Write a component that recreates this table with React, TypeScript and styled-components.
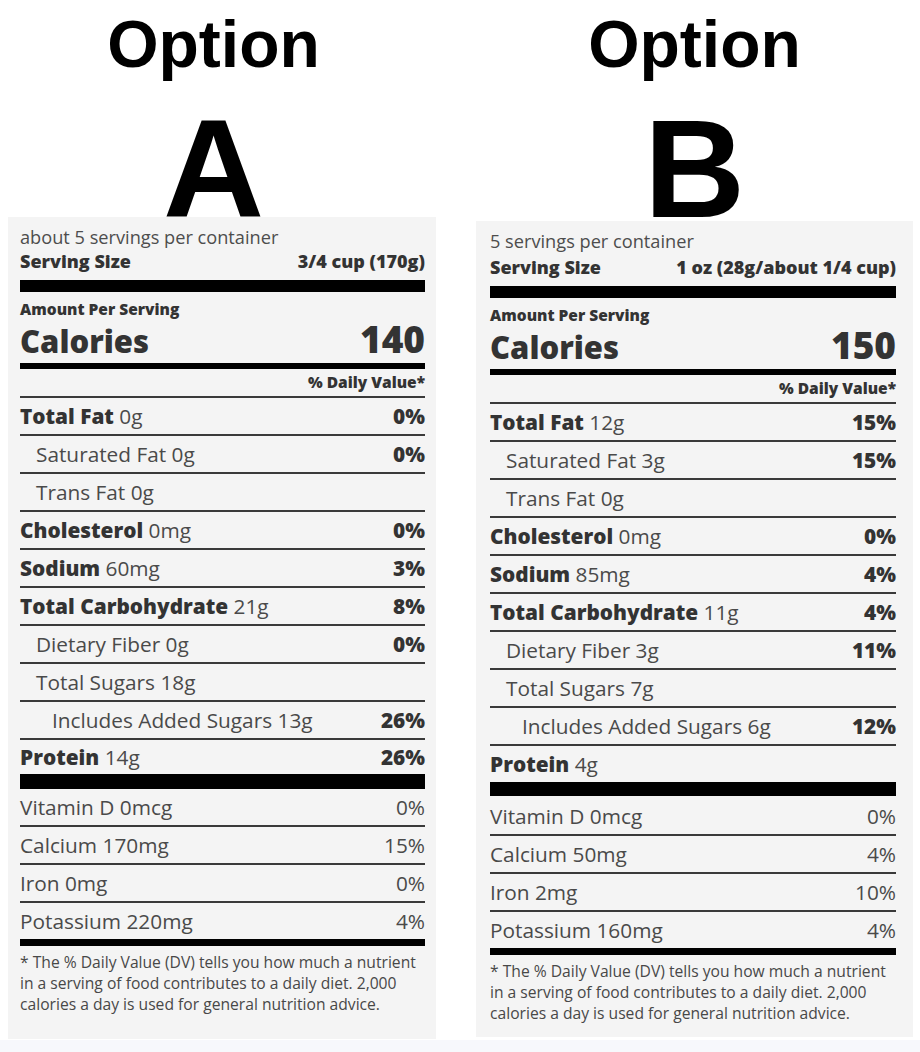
import React from 'react';
import styled, { createGlobalStyle } from 'styled-components';

const GlobalStyle = createGlobalStyle`
  html, body {
    margin: 0;
    padding: 0;
    background: #ffffff;
  }
  * {
    box-sizing: border-box;
  }
`;

interface Nutrient {
  name: string;
  amount: string;
  dv?: string;
  bold?: boolean;
  indent?: number;
}

interface Spacing {
  shift: number;
  letterH: number;
  padLeft: number;
  padRight: number;
  ssGap: number;
  proteinH: number;
  barH: number;
  vitGap: number;
  bottom: number;
}

interface LabelData {
  letter: string;
  servings: string;
  size: string;
  calories: string;
  nutrients: Nutrient[];
  protein: { amount: string; dv?: string };
  vitamins: [string, string][];
  spacing: Spacing;
}

const labels: LabelData[] = [
  {
    letter: 'A',
    servings: 'about 5 servings per container',
    size: '3/4 cup (170g)',
    calories: '140',
    nutrients: [
      { name: 'Total Fat', amount: '0g', dv: '0%', bold: true },
      { name: 'Saturated Fat', amount: '0g', dv: '0%', indent: 1 },
      { name: 'Trans Fat', amount: '0g', indent: 1 },
      { name: 'Cholesterol', amount: '0mg', dv: '0%', bold: true },
      { name: 'Sodium', amount: '60mg', dv: '3%', bold: true },
      { name: 'Total Carbohydrate', amount: '21g', dv: '8%', bold: true },
      { name: 'Dietary Fiber', amount: '0g', dv: '0%', indent: 1 },
      { name: 'Total Sugars', amount: '18g', indent: 1 },
      { name: 'Includes Added Sugars', amount: '13g', dv: '26%', indent: 2 },
    ],
    protein: { amount: '14g', dv: '26%' },
    vitamins: [
      ['Vitamin D 0mcg', '0%'],
      ['Calcium 170mg', '15%'],
      ['Iron 0mg', '0%'],
      ['Potassium 220mg', '4%'],
    ],
    spacing: { shift: 17, letterH: 129, padLeft: 12, padRight: 11, ssGap: 0, proteinH: 34, barH: 15, vitGap: 0, bottom: 24 },
  },
  {
    letter: 'B',
    servings: '5 servings per container',
    size: '1 oz (28g/about 1/4 cup)',
    calories: '150',
    nutrients: [
      { name: 'Total Fat', amount: '12g', dv: '15%', bold: true },
      { name: 'Saturated Fat', amount: '3g', dv: '15%', indent: 1 },
      { name: 'Trans Fat', amount: '0g', indent: 1 },
      { name: 'Cholesterol', amount: '0mg', dv: '0%', bold: true },
      { name: 'Sodium', amount: '85mg', dv: '4%', bold: true },
      { name: 'Total Carbohydrate', amount: '11g', dv: '4%', bold: true },
      { name: 'Dietary Fiber', amount: '3g', dv: '11%', indent: 1 },
      { name: 'Total Sugars', amount: '7g', indent: 1 },
      { name: 'Includes Added Sugars', amount: '6g', dv: '12%', indent: 2 },
    ],
    protein: { amount: '4g' },
    vitamins: [
      ['Vitamin D 0mcg', '0%'],
      ['Calcium 50mg', '4%'],
      ['Iron 2mg', '10%'],
      ['Potassium 160mg', '4%'],
    ],
    spacing: { shift: 0, letterH: 133, padLeft: 14, padRight: 17, ssGap: 2, proteinH: 36, barH: 14, vitGap: 2, bottom: 13 },
  },
];

const NutritionLabel: React.FC<{ data: LabelData }> = ({ data }) => {
  const s = data.spacing;
  return (
    <Column>
      <Heading $shift={s.shift}>
        <OptionWord>Option</OptionWord>
        <Letter $h={s.letterH}>{data.letter}</Letter>
      </Heading>
      <Panel $left={s.padLeft} $right={s.padRight} $bottom={s.bottom}>
        <Servings>{data.servings}</Servings>
        <SizeRow $gap={s.ssGap}>
          <span>Serving Size</span>
          <span>{data.size}</span>
        </SizeRow>
        <Bar $h={12} />
        <AmountLine>Amount Per Serving</AmountLine>
        <CaloriesRow>
          <CaloriesWord>Calories</CaloriesWord>
          <CaloriesValue>{data.calories}</CaloriesValue>
        </CaloriesRow>
        <Bar $h={6} />
        <DailyValue>% Daily Value*</DailyValue>
        {data.nutrients.map((n) => (
          <Row key={n.name} $indent={n.indent || 0}>
            <span>
              {n.bold ? <b>{n.name}</b> : n.name} {n.amount}
            </span>
            {n.dv && <b>{n.dv}</b>}
          </Row>
        ))}
        <Row $indent={0} $h={s.proteinH} $plain>
          <span>
            <b>Protein</b> {data.protein.amount}
          </span>
          {data.protein.dv && <b>{data.protein.dv}</b>}
        </Row>
        <Bar $h={s.barH} $after={s.vitGap} />
        {data.vitamins.map(([label, dv], i) => (
          <Row key={label} $indent={0} $plain={i === data.vitamins.length - 1}>
            <span>{label}</span>
            <span>{dv}</span>
          </Row>
        ))}
        <Bar $h={7} />
        <Footnote>
          * The % Daily Value (DV) tells you how much a nutrient
          <br />
          in a serving of food contributes to a daily diet. 2,000
          <br />
          calories a day is used for general nutrition advice.
        </Footnote>
      </Panel>
    </Column>
  );
};

const App: React.FC = () => {
  return (
    <Page>
      <GlobalStyle />
      <Columns>
        {labels.map((l) => (
          <NutritionLabel key={l.letter} data={l} />
        ))}
      </Columns>
      <BottomStrip />
    </Page>
  );
};

export default App;

const Page = styled.div`
  width: 920px;
  height: 1052px;
  overflow: hidden;
  display: flex;
  flex-direction: column;
  background: #ffffff;
`;

const Columns = styled.div`
  height: 1040px;
  display: grid;
  grid-template-columns: 428px 437px;
  column-gap: 40px;
  padding-left: 8px;
  align-items: start;
`;

const BottomStrip = styled.div`
  flex: 1;
  background: #f7f8fc;
`;

const Column = styled.div`
  display: flex;
  flex-direction: column;
`;

const Heading = styled.div<{ $shift: number }>`
  font-family: 'Liberation Sans', Arial, sans-serif;
  font-weight: 700;
  color: #000000;
  text-align: center;
  padding-right: ${(p) => p.$shift}px;
`;

const OptionWord = styled.div`
  font-size: 66px;
  line-height: 88px;
  height: 88px;
`;

const Letter = styled.div<{ $h: number }>`
  font-size: 140px;
  line-height: 97px;
  padding-top: 32px;
  height: ${(p) => p.$h}px;
`;

const Panel = styled.div<{ $left: number; $right: number; $bottom: number }>`
  background: #f4f4f4;
  padding: 8px ${(p) => p.$right}px ${(p) => p.$bottom}px ${(p) => p.$left}px;
  font-family: 'Open Sans', 'Noto Sans', sans-serif;
  font-weight: 400;
  color: #4a4a4a;

  b {
    font-weight: 800;
    color: #333333;
  }
`;

const Servings = styled.div`
  font-size: 18.2px;
  line-height: 24px;
  color: #4d4d4d;
`;

const SizeRow = styled.div<{ $gap: number }>`
  display: flex;
  justify-content: space-between;
  font-size: 18px;
  line-height: 25px;
  font-weight: 800;
  color: #333333;
  margin-top: ${(p) => p.$gap}px;
  margin-bottom: 6px;
`;

const Bar = styled.div<{ $h: number; $after?: number }>`
  height: ${(p) => p.$h}px;
  background: #000000;
  margin-bottom: ${(p) => p.$after || 0}px;
`;

const AmountLine = styled.div`
  font-size: 15.5px;
  line-height: 22px;
  font-weight: 800;
  color: #333333;
  margin-top: 6px;
`;

const CaloriesRow = styled.div`
  display: flex;
  justify-content: space-between;
  align-items: baseline;
  height: 37px;
  line-height: 37px;
  margin-bottom: 6px;
  font-weight: 800;
  color: #333333;
`;

const CaloriesWord = styled.span`
  font-size: 31px;
`;

const CaloriesValue = styled.span`
  font-size: 37px;
`;

const DailyValue = styled.div`
  text-align: right;
  font-size: 15.5px;
  line-height: 22px;
  font-weight: 800;
  color: #333333;
  margin-top: 2px;
  padding-bottom: 3px;
  border-bottom: 2px solid #3a3a3a;
`;

const Row = styled.div<{ $indent: number; $h?: number; $plain?: boolean }>`
  display: flex;
  justify-content: space-between;
  align-items: center;
  height: ${(p) => (p.$h || 36) + (p.$plain ? 0 : 2)}px;
  line-height: ${(p) => p.$h || 36}px;
  font-size: 20.8px;
  padding-left: ${(p) => p.$indent * 16}px;
  border-bottom: ${(p) => (p.$plain ? 'none' : '2px solid #3a3a3a')};
  white-space: nowrap;
`;

const Footnote = styled.div`
  padding-top: 6px;
  font-size: 15.65px;
  line-height: 21px;
  font-weight: 400;
  color: #484848;
  white-space: nowrap;
`;
